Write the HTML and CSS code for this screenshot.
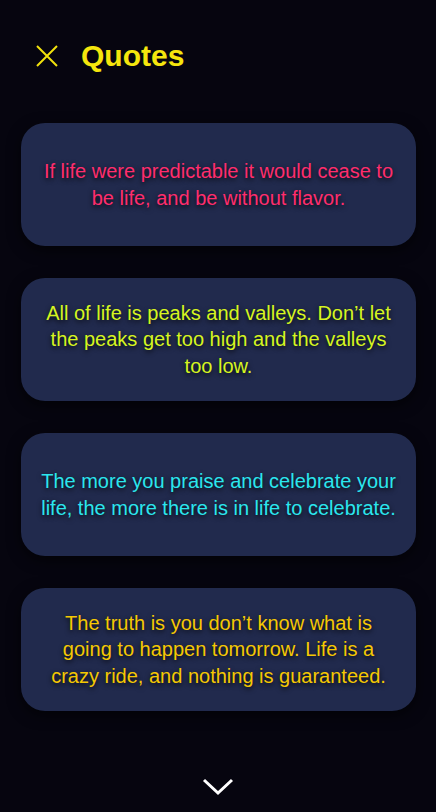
FILE: index.html
```html
<!DOCTYPE html>
<html>
<head>
<meta charset="utf-8">
<link rel="stylesheet" href="styles.css">
</head>
<body>
<div class="screen">
  <header class="header">
    <svg class="close" width="24" height="24" viewBox="0 0 24 24"><path d="M2 2 L22 22 M22 2 L2 22" stroke="#f2e20c" stroke-width="2" fill="none"/></svg>
    <h1 class="title">Quotes</h1>
  </header>
  <main class="list">
    <div class="card"><p class="quote pink">If life were predictable it would cease to be life, and be without flavor.</p></div>
    <div class="card"><p class="quote lime">All of life is peaks and valleys. Don’t let the peaks get too high and the valleys too low.</p></div>
    <div class="card"><p class="quote cyan">The more you praise and celebrate your life, the more there is in life to celebrate.</p></div>
    <div class="card"><p class="quote gold">The truth is you don’t know what is going to happen tomorrow. Life is a crazy ride, and nothing is guaranteed.</p></div>
  </main>
  <footer class="footer">
    <svg width="32" height="18" viewBox="0 0 32 18"><path d="M2 2 L16 15 L30 2" stroke="#ffffff" stroke-width="3" fill="none"/></svg>
  </footer>
</div>
</body>
</html>
```
FILE: styles.css
```css
html, body {
  margin: 0;
  padding: 0;
  background: #06050f;
}
.screen {
  width: 436px;
  height: 812px;
  font-family: "Liberation Sans", Arial, sans-serif;
  display: flex;
  flex-direction: column;
}
.header {
  display: flex;
  align-items: center;
  gap: 22px;
  padding: 43px 0 0 35px;
  height: 26px;
}
.close { display: block; }
.title {
  margin: 0;
  font-size: 30px;
  font-weight: bold;
  color: #f5e60d;
  line-height: 26px;
}
.list {
  display: flex;
  flex-direction: column;
  gap: 32px;
  padding: 54px 20px 0 21px;
}
.card {
  height: 123px;
  background: #212a4d;
  border-radius: 24px;
  display: flex;
  align-items: center;
  justify-content: center;
  padding: 0 19px;
  box-sizing: border-box;
  box-shadow: 0 4px 14px rgba(0,0,0,0.6);
}
.quote {
  margin: 0;
  text-align: center;
  font-size: 20px;
  line-height: 26.5px;
  text-shadow: 0 2px 5px rgba(0,0,0,0.8);
}
.pink { color: #ff2d6d; }
.lime { color: #d6f51f; }
.cyan { color: #2be6ee; }
.gold { color: #f5c802; }
.footer {
  margin-top: auto;
  display: flex;
  justify-content: center;
  padding-bottom: 16px;
}
.footer svg { display: block; }
```
